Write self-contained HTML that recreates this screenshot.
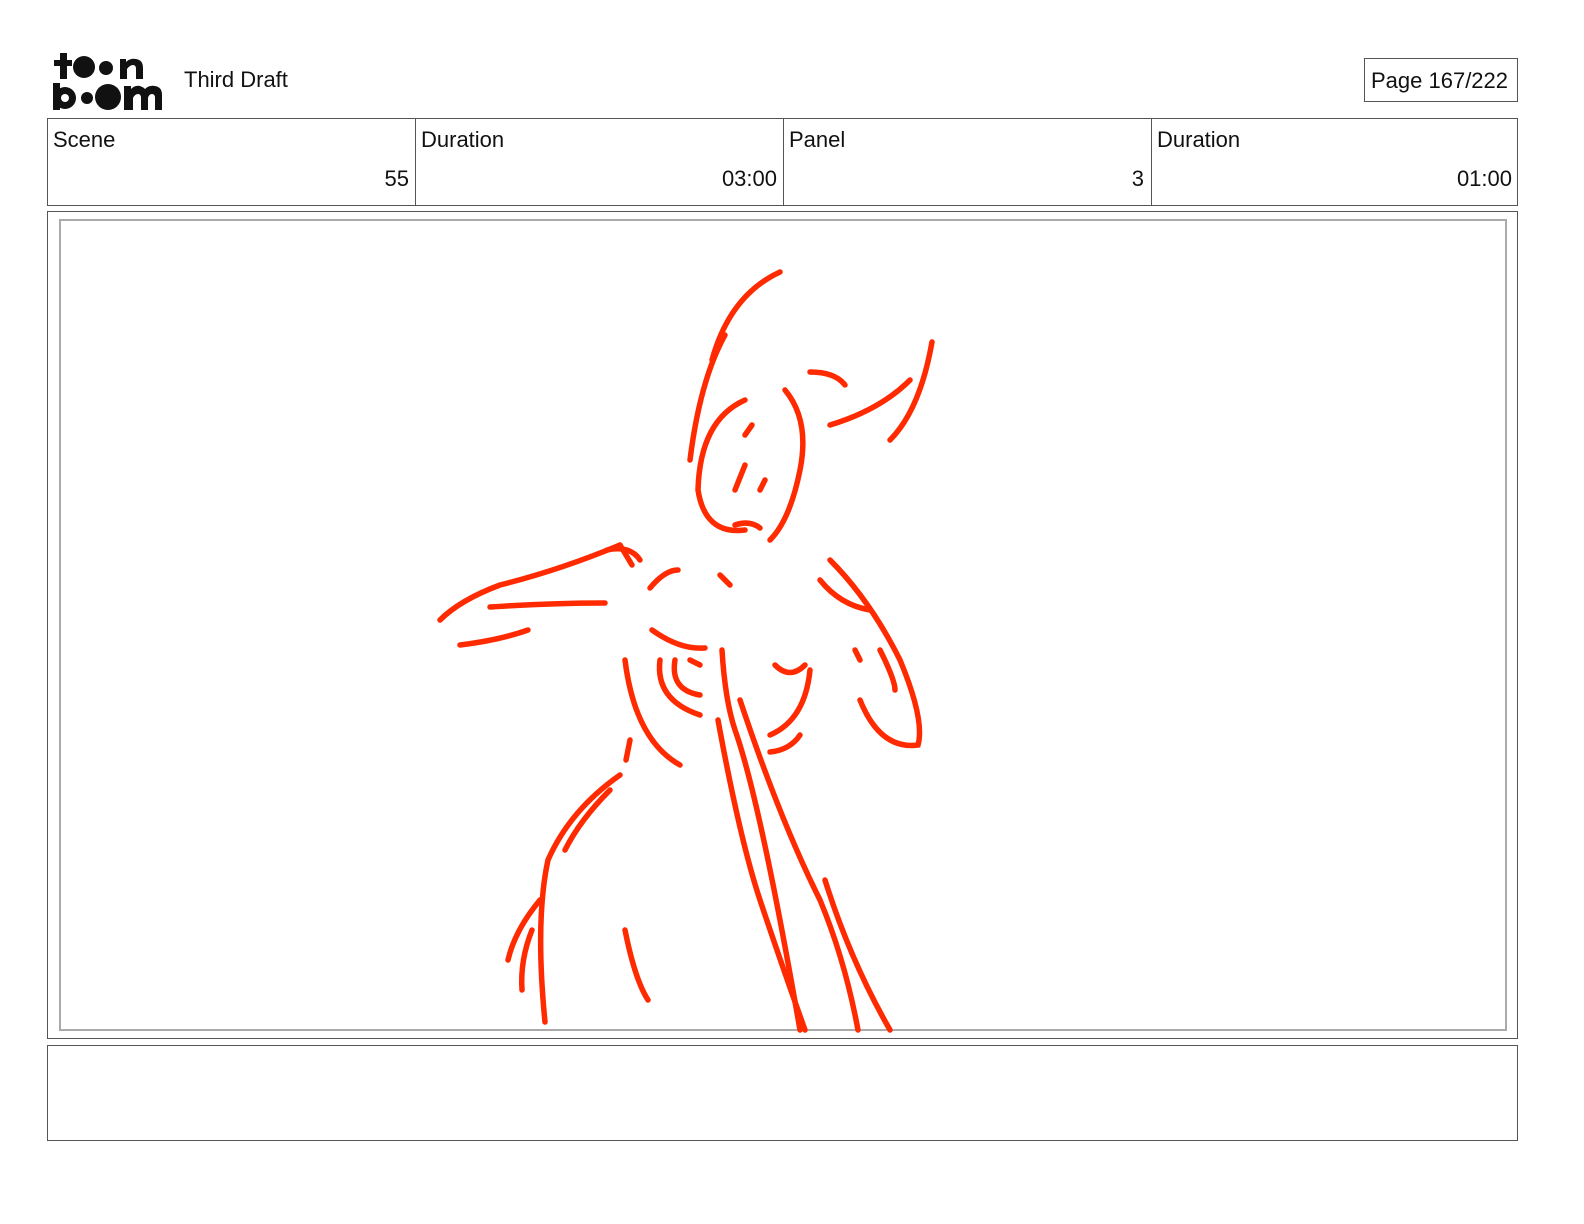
<!DOCTYPE html>
<html style="margin:0;width:1584px;height:1224px;overflow:hidden"><head><meta charset="utf-8"><style>
body{margin:0;background:#fff;width:1584px;height:1224px;position:relative;font-family:"Liberation Sans",sans-serif;color:#111;overflow:hidden}
.a{position:absolute;box-sizing:border-box}
.t{font-size:22px}
</style></head><body>
<svg class="a" style="left:50px;top:50px" width="115" height="62" viewBox="0 0 115 62">
<g fill="#111">
<rect x="10" y="3" width="7" height="26"/><rect x="4" y="10" width="18" height="6"/>
<circle cx="34" cy="17" r="11"/><circle cx="56" cy="18" r="7"/>
<path d="M70 29V9h6v3q4-4 10-3q7 1 7 9v11h-7V19q0-4-3-4t-6 4v10z"/>
<rect x="3" y="33" width="7" height="27"/><circle cx="15" cy="48" r="11"/><circle cx="15" cy="48" r="4" fill="#fff"/>
<circle cx="37" cy="48" r="6"/><circle cx="58" cy="47" r="13"/>
<path d="M74 60V36h7v3q4-4 9-3q3 1 5 3q4-4 10-3q7 1 7 9v15h-7V48q0-4-3-4t-4 4v12h-7V48q0-4-3-4t-5 4v12z"/>
</g></svg>
<div class="a t" style="left:184px;top:67px">Third Draft</div>
<div class="a t" style="left:1364px;top:58px;width:154px;height:44px;border:1px solid #555;padding:9px 0 0 6px">Page 167/222</div>
<div class="a" style="left:47px;top:118px;width:1471px;height:88px;border:1px solid #555"></div>
<div class="a" style="left:415px;top:118px;width:1px;height:88px;background:#555"></div>
<div class="a" style="left:783px;top:118px;width:1px;height:88px;background:#555"></div>
<div class="a" style="left:1151px;top:118px;width:1px;height:88px;background:#555"></div>
<div class="a t" style="left:53px;top:127px">Scene</div>
<div class="a t" style="left:421px;top:127px">Duration</div>
<div class="a t" style="left:789px;top:127px">Panel</div>
<div class="a t" style="left:1157px;top:127px">Duration</div>
<div class="a t" style="left:47px;width:362px;top:166px;text-align:right">55</div>
<div class="a t" style="left:415px;width:362px;top:166px;text-align:right">03:00</div>
<div class="a t" style="left:783px;width:361px;top:166px;text-align:right">3</div>
<div class="a t" style="left:1151px;width:361px;top:166px;text-align:right">01:00</div>
<div class="a" style="left:47px;top:211px;width:1471px;height:828px;border:1px solid #555"></div>
<div class="a" style="left:59px;top:219px;width:1448px;height:812px;border:2px solid #aaa"></div>
<div class="a" style="left:47px;top:1045px;width:1471px;height:96px;border:1px solid #555"></div>
<svg class="a" style="left:0;top:0" width="1584" height="1224"><g fill="none" stroke="#ff2a00" stroke-width="5.5" stroke-linecap="round">
<path d="M780 272Q730 295 712 360"/><path d="M725 335Q700 380 690 460"/>
<path d="M745 400Q700 420 698 490Q705 535 745 530"/><path d="M785 390Q810 420 800 470Q790 520 770 540"/>
<path d="M810 372Q835 372 845 385"/><path d="M830 425Q880 410 910 380"/><path d="M932 342Q920 410 890 440"/>
<path d="M745 435L752 425"/><path d="M745 465L735 490"/><path d="M765 480L760 490"/><path d="M735 525Q750 520 760 528"/>
<path d="M620 545Q560 570 500 585Q460 600 440 620"/><path d="M490 607Q550 603 605 603"/><path d="M460 645Q500 640 528 630"/>
<path d="M607 550Q630 545 640 560"/><path d="M620 545L632 565"/><path d="M650 588Q665 570 678 570"/><path d="M720 575L730 585"/>
<path d="M830 560Q870 600 900 660Q925 720 918 745Q880 750 860 700"/><path d="M820 580Q840 605 870 610"/><path d="M880 650Q895 680 895 690"/><path d="M855 650L860 660"/>
<path d="M652 630Q680 650 705 648"/><path d="M660 660Q655 700 700 715"/><path d="M675 660Q670 690 700 695"/><path d="M690 660L700 665"/>
<path d="M625 660Q635 740 680 765"/><path d="M775 665Q790 680 805 665"/><path d="M810 670Q805 720 770 735"/><path d="M800 735Q790 750 770 752"/>
<path d="M722 650Q725 700 735 730Q760 800 800 1030"/><path d="M718 720Q740 840 760 900Q780 960 805 1030"/>
<path d="M740 700Q780 820 820 900Q845 960 858 1030"/><path d="M825 880Q850 960 890 1030"/>
<path d="M620 775Q570 810 548 860Q535 920 545 1022"/><path d="M610 790Q580 820 565 850"/><path d="M540 900Q515 930 508 960"/><path d="M532 930Q520 960 522 990"/>
<path d="M625 930Q635 980 648 1000"/><path d="M630 740L626 760"/></g></svg>
</body></html>
